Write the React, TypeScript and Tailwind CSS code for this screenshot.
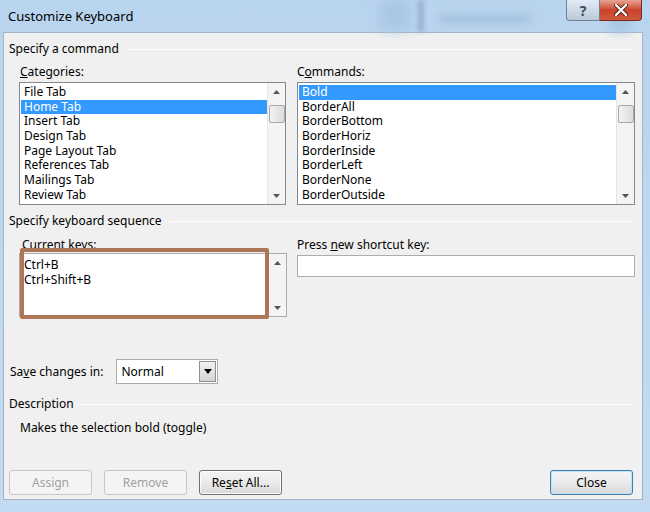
import React from 'react'

const categories = ['File Tab', 'Home Tab', 'Insert Tab', 'Design Tab', 'Page Layout Tab', 'References Tab', 'Mailings Tab', 'Review Tab']
const commands = ['Bold', 'BorderAll', 'BorderBottom', 'BorderHoriz', 'BorderInside', 'BorderLeft', 'BorderNone', 'BorderOutside']

function Arrow({ up }: { up?: boolean }) {
    return (
        <svg width="7" height="4" viewBox="0 0 7 4" className="block">
            {up ? <path d="M0 4 L3.5 0 L7 4 Z" fill="#555" /> : <path d="M0 0 L7 0 L3.5 4 Z" fill="#555" />}
        </svg>
    )
}

function ScrollBar({ thumb }: { thumb?: boolean }) {
    return (
        <div className="w-[18px] flex flex-col items-center bg-[#f4f4f4] border-l border-[#e6e6e6]">
            <div className="h-[17px] flex items-center justify-center"><Arrow up /></div>
            {thumb && <div className="w-[16px] h-[18px] mt-[5px] border border-[#a8a8a8] rounded-[2px] bg-gradient-to-r from-[#f2f2f2] to-[#dcdcdc]" />}
            <div className="flex-1" />
            <div className="h-[17px] flex items-center justify-center"><Arrow /></div>
        </div>
    )
}

function ListBox({ items, selected, width }: { items: string[]; selected: number; width: string }) {
    return (
        <div className={`${width} h-[123px] flex border border-[#828790] bg-white`}>
            <div className="flex-1 pt-[2px] pl-[1px]">
                {items.map((item, i) => (
                    <div
                        key={item}
                        className={`h-[14.7px] leading-[14.7px] pl-[3px] ${i === selected ? 'bg-[#3399ff] text-white' : 'text-black'}`}
                    >
                        {item}
                    </div>
                ))}
            </div>
            <ScrollBar thumb />
        </div>
    )
}

function Heading({ label }: { label: string }) {
    return (
        <div className="flex items-center h-[16px] pr-[8px]">
            <span className="text-black">{label}</span>
            <div className="flex-1 ml-[8px] h-px bg-[#dcdcdc] border-b border-white" />
        </div>
    )
}

function Button({ label, disabled, variant }: { label: React.ReactNode; disabled?: boolean; variant?: 'close' }) {
    if (disabled) {
        return (
            <div className="w-[83px] h-[25px] flex items-center justify-center rounded-[3px] border border-[#c7c7c7] bg-[#f4f4f4] text-[#a0a0a0]">
                {label}
            </div>
        )
    }
    return (
        <div
            className={`w-[83px] h-[25px] flex items-center justify-center rounded-[3px] border text-black bg-gradient-to-b from-[#f4f4f4] via-[#ebebeb] to-[#d9d9d9] ${variant === 'close' ? 'border-[#3c7fb1] shadow-[inset_0_0_0_1px_#bfe3f8]' : 'border-[#707070] shadow-[inset_0_0_0_1px_#fcfcfc]'}`}
        >
            {label}
        </div>
    )
}

export default function App() {
    return (
        <div
            className="w-[650px] h-[512px] flex flex-col bg-gradient-to-b from-[#b9d4ee] to-[#c3dbf2] text-[12px] overflow-hidden"
            style={{ fontFamily: '"Noto Sans", "Segoe UI", sans-serif' }}
        >
            {/* title bar */}
            <div className="h-[32px] flex items-start relative">
                <div className="pl-[8px] pt-[7px] text-[13px] text-black">Customize Keyboard</div>
                <div className="absolute left-[380px] top-[0px] w-[30px] h-[30px] bg-[#a9c6e4] blur-[6px]" />
                <div className="absolute left-[418px] top-[0px] w-[6px] h-[32px] bg-[#98b3d0] blur-[2px]" />
                <div className="absolute left-[440px] top-[16px] w-[90px] h-[6px] bg-[#9bb7d6] blur-[4px]" />
                <div className="absolute left-[610px] top-[0px] w-[20px] h-[32px] bg-[#a8c5e3] blur-[5px]" />
                <div className="flex-1" />
                <div className="flex mr-[8px] relative">
                    <div className="w-[34px] h-[21px] flex items-center justify-center rounded-bl-[4px] border border-[#6e7f94] border-t-0 bg-gradient-to-b from-[#e2ebf4] to-[#b9c9da] text-[#3b4a5c] text-[14px] font-bold">
                        ?
                    </div>
                    <div className="w-[42px] h-[21px] flex items-center justify-center rounded-br-[4px] border border-[#7a2a1d] border-t-0 border-l-0 bg-gradient-to-b from-[#e8a493] via-[#c8432b] to-[#d0583c]">
                        <svg width="14" height="12" viewBox="0 0 14 12">
                            <path d="M2 1 L12 11 M12 1 L2 11" stroke="#4a1a10" strokeWidth="4" strokeLinecap="round" />
                            <path d="M2 1 L12 11 M12 1 L2 11" stroke="#ffffff" strokeWidth="2.4" strokeLinecap="round" />
                        </svg>
                    </div>
                </div>
            </div>

            {/* dialog body */}
            <div className="flex-1 mx-[3px] mb-[12px] mr-[7px] border border-[#a5b4c4] bg-[#f0f0f0] flex flex-col pl-[5px] pt-[8px] text-black">
                <Heading label="Specify a command" />

                <div className="flex mt-[6px]">
                    <div className="ml-[10px] flex flex-col">
                        <div className="h-[16px] pl-[1px]"><span className="underline">C</span>ategories:</div>
                        <div className="mt-[3px]"><ListBox items={categories} selected={1} width="w-[267px]" /></div>
                    </div>
                    <div className="ml-[11px] flex flex-col">
                        <div className="h-[16px]">C<span className="underline">o</span>mmands:</div>
                        <div className="mt-[3px]"><ListBox items={commands} selected={0} width="w-[338px]" /></div>
                    </div>
                </div>

                <div className="mt-[8px]"><Heading label="Specify keyboard sequence" /></div>

                <div className="flex mt-[7px]">
                    <div className="ml-[10px] flex flex-col relative">
                        <div className="h-[16px] pl-[3px]">Current <span className="underline">k</span>eys:</div>
                        <div className="mt-[1px] w-[268px] h-[64px] flex border border-[#acacac] bg-white">
                            <div className="flex-1 pt-[4px] pl-[4px] leading-[14.7px]">
                                <div>Ctrl+B</div>
                                <div>Ctrl+Shift+B</div>
                            </div>
                            <ScrollBar />
                        </div>
                        <div className="absolute left-[1px] top-[12px] w-[249px] h-[71px] border-[4px] border-[#ad7656] rounded-[2px]" />
                    </div>
                    <div className="ml-[10px] flex flex-col">
                        <div className="h-[16px]">Press <span className="underline">n</span>ew shortcut key:</div>
                        <div className="mt-[3px] w-[338px] h-[22px] border border-[#acacac] bg-white" />
                    </div>
                </div>

                <div className="flex items-center mt-[42px] h-[25px]">
                    <div className="pl-[1px]">Sa<span className="underline">v</span>e changes in:</div>
                    <div className="ml-[13px] w-[102px] h-[25px] flex border border-[#acacac] bg-white">
                        <div className="flex-1 pl-[4px] flex items-center">Normal</div>
                        <div className="w-[17px] m-[1px] flex items-center justify-center border border-[#8e8f8f] bg-gradient-to-b from-[#f2f2f2] to-[#d4d4d4]">
                            <svg width="8" height="5" viewBox="0 0 8 5"><path d="M0 0 L8 0 L4 5 Z" fill="#000" /></svg>
                        </div>
                    </div>
                </div>

                <div className="mt-[12px]"><Heading label="Description" /></div>
                <div className="mt-[7px] ml-[11px] h-[16px]">Makes the selection bold (toggle)</div>

                <div className="flex-1" />
                <div className="flex items-center mb-[4px] pr-[9px]">
                    <div><Button label="Assign" disabled /></div>
                    <div className="ml-[12px]"><Button label="Remove" disabled /></div>
                    <div className="ml-[12px]"><Button label={<span>Re<span className="underline">s</span>et All...</span>} /></div>
                    <div className="flex-1" />
                    <Button label="Close" variant="close" />
                </div>
            </div>
        </div>
    )
}
